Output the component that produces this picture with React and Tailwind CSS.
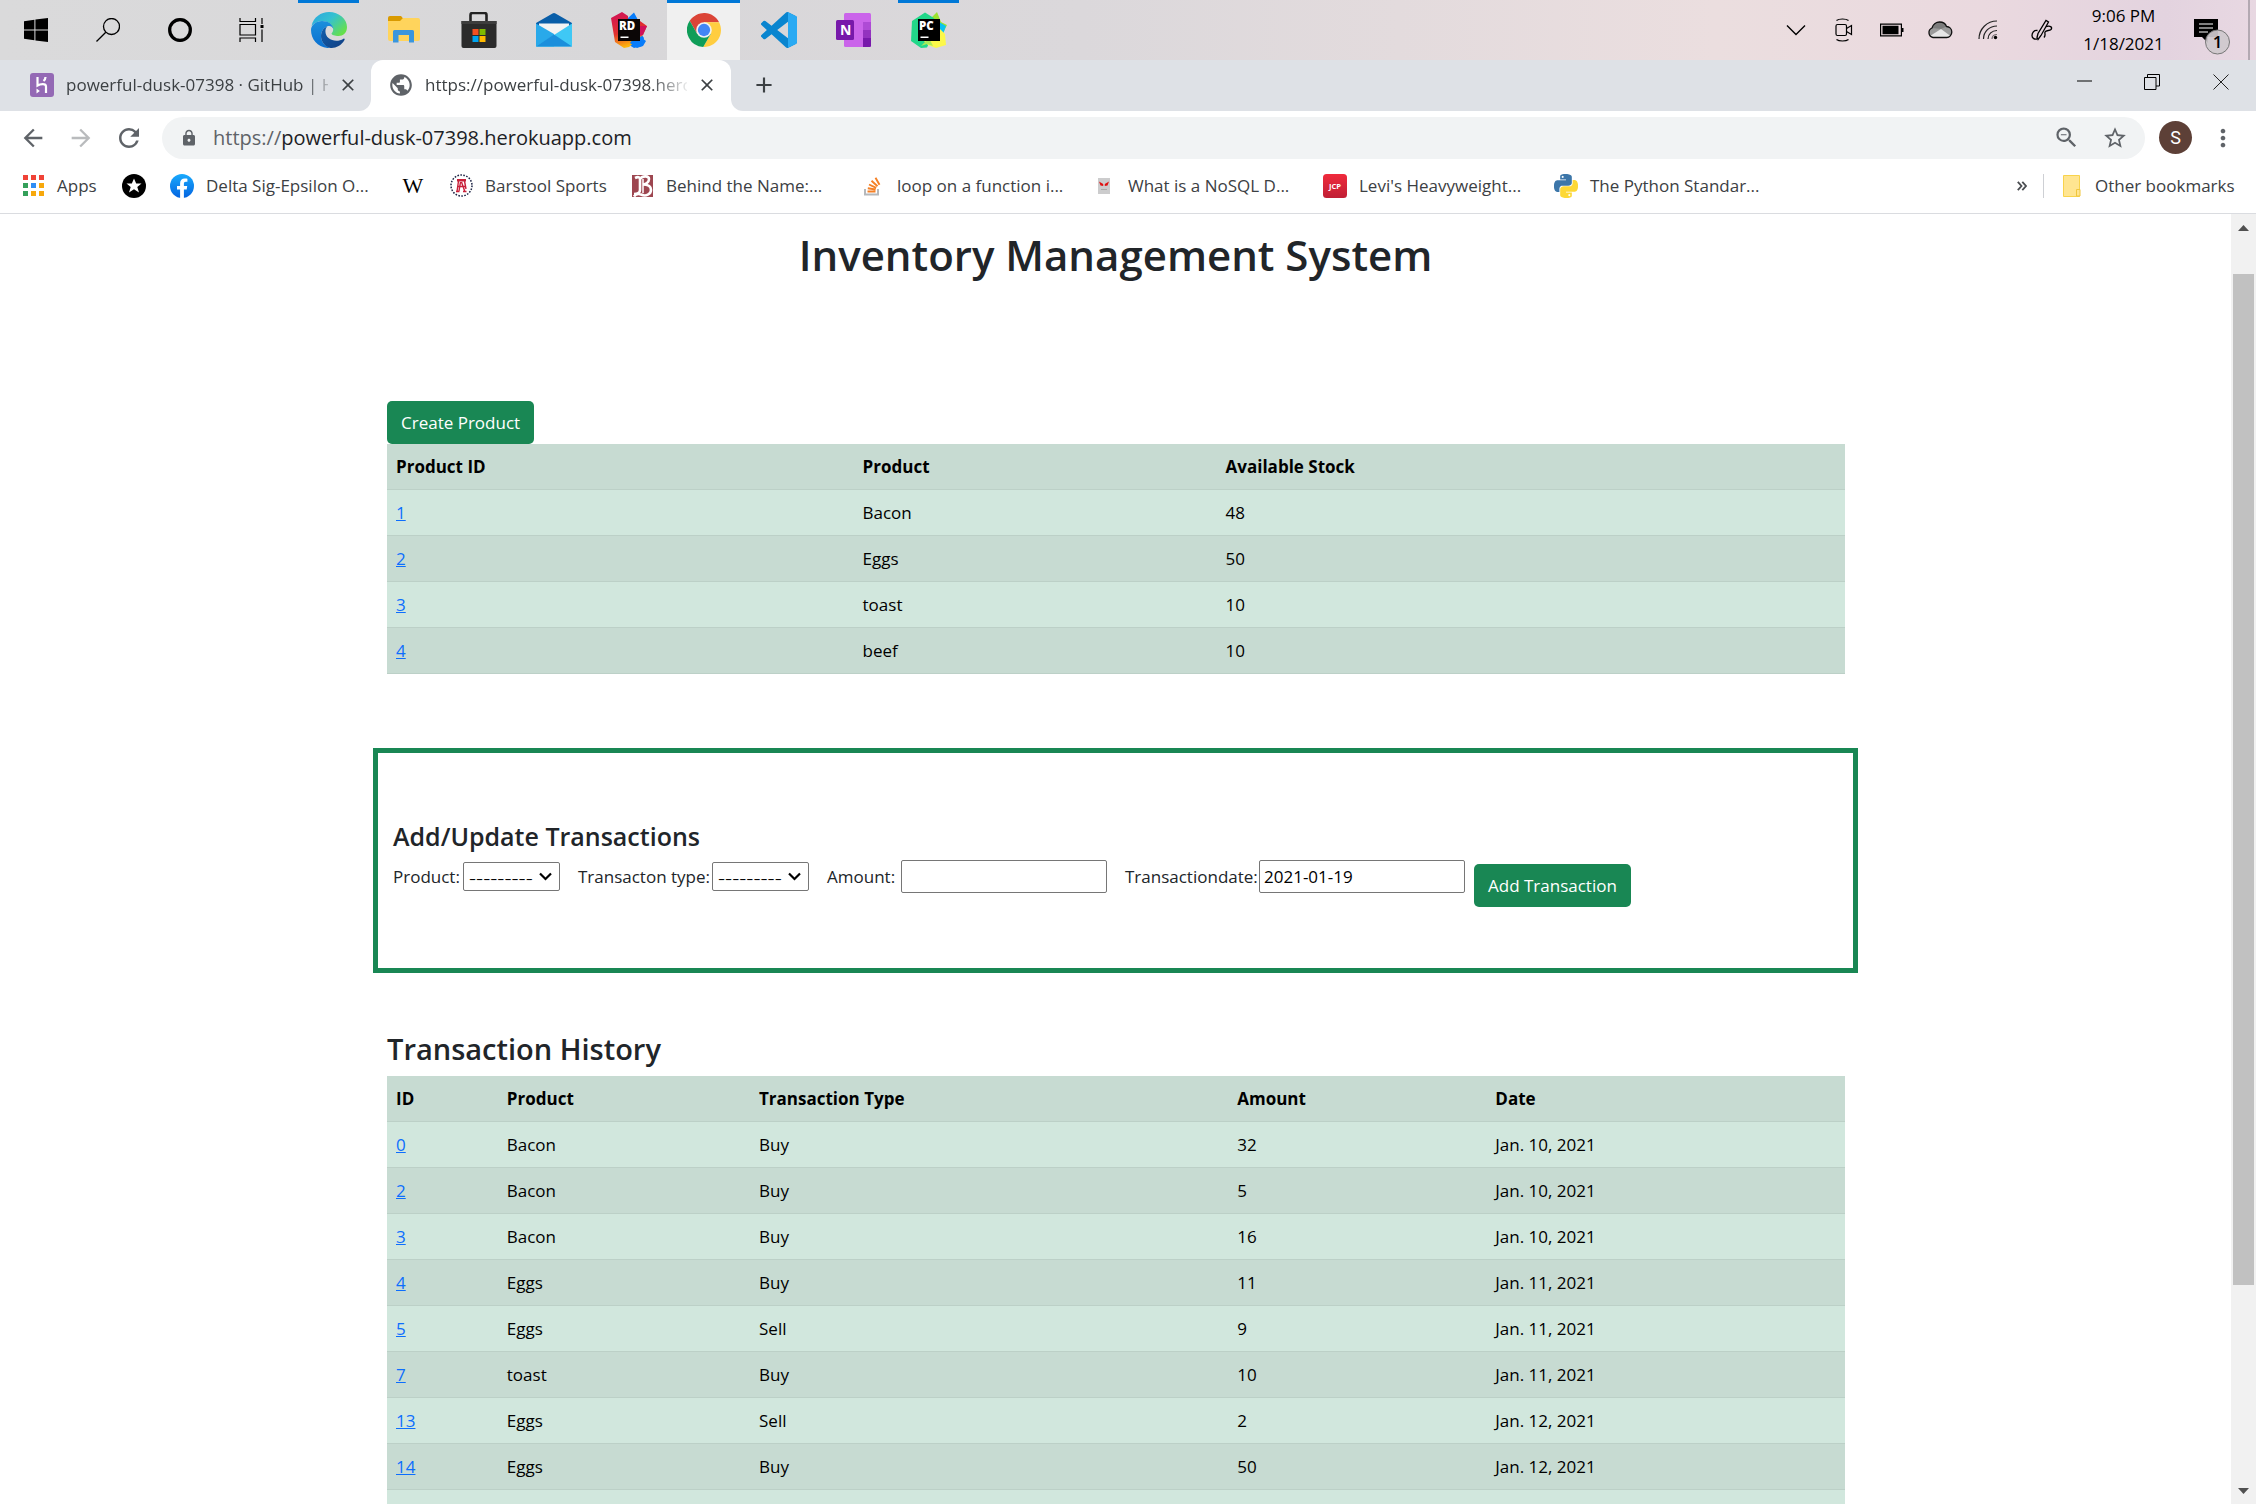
import React from "react";
import {
  MdArrowBack,
  MdArrowForward,
  MdRefresh,
  MdLock,
  MdZoomOut,
  MdStarBorder,
  MdMoreVert,
  MdPublic,
  MdAdd,
  MdClose,
} from "react-icons/md";

/* ---------- Taskbar icons ---------- */

const WindowsIcon = () => (
  <svg width="24" height="24" viewBox="0 0 24 24">
    <path d="M0 3.2 10.4 1.7V11.5H0zM11.4 1.6 24 0V11.5H11.4zM0 12.5H10.4V22.3L0 20.8zM11.4 12.5H24V24L11.4 22.4z" />
  </svg>
);

const SearchIcon = () => (
  <svg width="24" height="24" viewBox="0 0 24 24" fill="none" stroke="#000" strokeWidth="1.3">
    <circle cx="15.5" cy="8.5" r="8" />
    <path d="M9.8 14.2 0.5 23.5" />
  </svg>
);

const CortanaIcon = () => (
  <svg width="26" height="26" viewBox="0 0 26 26" fill="none" stroke="#000">
    <circle cx="13" cy="13" r="10.3" strokeWidth="3.2" />
    <circle cx="13" cy="13" r="11.6" strokeWidth="1" opacity=".35" />
  </svg>
);

const TaskViewIcon = () => (
  <svg width="26" height="24" viewBox="0 0 26 24" fill="none" stroke="#000" strokeWidth="1.2">
    <path d="M1 0v3.5h15.500V0M1 24v-4h15.500v4M1 6.500h15.500v10.500H1zM23 0v6M23 11.500V24" />
    <path d="M21.500 7h3v3h-3z" fill="#000" stroke="none" />
  </svg>
);

const EdgeIcon = () => (
  <svg width="36" height="36" viewBox="0 0 36 36">
    <defs>
      <linearGradient id="edgeTop" x1="0" y1="0" x2="1" y2=".7">
        <stop offset="0" stopColor="#2aa5e0" />
        <stop offset=".5" stopColor="#35c1d0" />
        <stop offset="1" stopColor="#66e04a" />
      </linearGradient>
      <linearGradient id="edgeBody" x1="0" y1="0" x2="0" y2="1">
        <stop offset="0" stopColor="#1b8fdc" />
        <stop offset="1" stopColor="#0a6fd0" />
      </linearGradient>
      <linearGradient id="edgeTail" x1="0" y1="0" x2="1" y2="1">
        <stop offset="0" stopColor="#0f5fae" />
        <stop offset="1" stopColor="#123f82" />
      </linearGradient>
    </defs>
    <path fill="url(#edgeTop)" d="M.5 14C2.500 5 10 0 18 0c10 0 18 7 18 15 0 6-4 9-8.500 9-3.500 0-7-1-7-2.500 1.500-1.500 2-3.500 1.500-5.500C21 11.500 16 9 11 9 7 9 3 11 .5 14z" />
    <path fill="url(#edgeBody)" d="M0 18c0-5 5-9 11-9 6.500 0 11 3.500 11.300 8-1-2.500-3.300-3.500-6.300-2.500-4 1.500-6 5.500-6 9.500 0 6 4.500 11 10 12C8 37 0 28 0 18z" />
    <path fill="url(#edgeTail)" d="M16 14.500c-2.500 3.500-2 8.500 1.500 11.500 4.500 3.700 10.500 3.500 15 .7.800-.4 1.500.3 1 1.300C30 34 24.500 36.200 19.500 36 13 34.500 10 29 10 24c0-4 2-8 6-9.500z" />
  </svg>
);

const FolderIcon = () => (
  <svg width="32" height="28" viewBox="0 0 32 28">
    <path d="M0 2a2 2 0 0 1 2-2h11l3 3.500L13 7H0z" fill="#d99a00" />
    <path d="M0 5h12l3-3h15a2 2 0 0 1 2 2v19a2 2 0 0 1-2 2H2a2 2 0 0 1-2-2z" fill="#ffd45c" />
    <path d="M5 15.500a1.500 1.500 0 0 1 1.500-1.500h18a1.500 1.500 0 0 1 1.500 1.500V26.500h-5V19H10.500v7.500H5z" fill="#3a96dd" />
  </svg>
);

const StoreIcon = () => (
  <svg width="36" height="36" viewBox="0 0 36 36">
    <path d="M9.500 11V3a2 2 0 0 1 2-2h12a2 2 0 0 1 2 2v8" fill="none" stroke="#222" strokeWidth="2.600" />
    <path d="M.5 9h35v25a2 2 0 0 1-2 2h-31a2 2 0 0 1-2-2z" fill="#2b2b2b" />
    <path d="M.5 9h35v3H.5z" fill="#3d3d3d" />
    <path d="M11.500 17h6v6h-6z" fill="#f25022" />
    <path d="M18.500 17h6v6h-6z" fill="#7fba00" />
    <path d="M11.500 24h6v6h-6z" fill="#00a4ef" />
    <path d="M18.500 24h6v6h-6z" fill="#ffb900" />
  </svg>
);

const MailIcon = () => (
  <svg width="36" height="34" viewBox="0 0 36 34">
    <path d="M0 10 16.500.5a3 3 0 0 1 3 0L36 10v4H0z" fill="#0a5ea8" />
    <path d="M3 10.500h30v12H3z" fill="#f3f3f3" />
    <path d="M0 10.500 18 21v12.500H0z" fill="#29a9ea" />
    <path d="M36 10.500 0 33.500h36z" fill="#3fc8f5" />
    <path d="M18 21.500 36 33.500H0z" fill="#1b8fdc" />
  </svg>
);

const RiderIcon = () => (
  <svg width="36" height="36" viewBox="0 0 36 36">
    <defs>
      <linearGradient id="rdA" x1="0" y1="0" x2=".3" y2="1">
        <stop offset="0" stopColor="#d0105a" />
        <stop offset=".6" stopColor="#e0302d" />
        <stop offset="1" stopColor="#fdb60d" />
      </linearGradient>
    </defs>
    <path d="M17 6 23 .5 27 8l2.500 13L33 26l-2 8-8 2-8-5z" fill="#087cfa" />
    <path d="M0 6 11 0l6 4v3l12 5 0-3 7 5-4 9-14 12-5 1-9-6z" fill="url(#rdA)" />
    <path d="M26 14l10 0-4 9-6 2z" fill="#d0105a" />
    <path d="M26 22 35 29l-3 5-6 2-7-5z" fill="#087cfa" />
    <path d="M7 7h22v22H7z" fill="#0b0606" />
    <path d="M9.500 24.500h8v1.500h-8z" fill="#fff" />
    <text x="8" y="17.500" fontSize="11.500" fontWeight="800" fontFamily="Open Sans, sans-serif" fill="#fff">RD</text>
  </svg>
);

const PyCharmIcon = () => (
  <svg width="36" height="36" viewBox="0 0 36 36">
    <path d="M20 6 26 0l4 10 6 3-6 12z" fill="#9be22f" />
    <path d="M28 10l7 4-3 8h-6z" fill="#07c3f2" />
    <path d="M1 9 14 .5l8 5 6 6-12 24-6 .5L0 29z" fill="#21d789" />
    <path d="M12 28 29 17l5 5 1 11-10 3-8-3z" fill="#fcf84a" />
    <path d="M10 34l8-8 4 8-6-2z" fill="#a8ea5a" />
    <path d="M7 7h22v22H7z" fill="#000" />
    <path d="M9.500 24.500h8v1.500h-8z" fill="#fff" />
    <text x="8" y="17.500" fontSize="11.500" fontWeight="800" fontFamily="Open Sans, sans-serif" fill="#fff">PC</text>
  </svg>
);

const ChromeIcon = () => (
  <svg width="34" height="34" viewBox="0 0 48 48">
    <path d="M24 24V13H45.300A24 24 0 0 0 3.800 11L14.500 29.500z" fill="#db4437" />
    <path d="M24 24 33.500 29.500 22.900 48A24 24 0 0 0 45.300 13H24z" fill="#ffcd40" />
    <path d="M24 24 14.500 29.500 3.800 11A24 24 0 0 0 22.900 48L33.500 29.500z" fill="#0f9d58" />
    <circle cx="24" cy="24" r="11" fill="#f1f1f1" />
    <circle cx="24" cy="24" r="8.700" fill="#4285f4" />
  </svg>
);

const CodeIcon = () => (
  <svg width="36" height="36" viewBox="0 0 24 24">
    <path
      fill="#0a85cf"
      d="M23.150 2.587L18.210.21a1.494 1.494 0 0 0-1.705.29l-9.460 8.630-4.120-3.128a.999.999 0 0 0-1.276.057L.327 7.261A1 1 0 0 0 .326 8.740L3.899 12 .326 15.260a1 1 0 0 0 .001 1.479L1.650 17.940a.999.999 0 0 0 1.276.057l4.120-3.128 9.460 8.630a1.492 1.492 0 0 0 1.704.29l4.942-2.377A1.500 1.500 0 0 0 24 20.060V3.939a1.500 1.500 0 0 0-.85-1.352zm-5.146 14.861L10.826 12l7.178-5.448v10.896z"
    />
    <path fill="#2aaaf3" d="M18 .15 23.150 2.587a1.500 1.500 0 0 1 .85 1.352V20.060a1.500 1.500 0 0 1-.85 1.352L18 23.850z" />
  </svg>
);

const OneNoteIcon = () => (
  <svg width="36" height="34" viewBox="0 0 36 34">
    <rect x="8" y="0" width="27" height="34" rx="1.500" fill="#ca64ea" />
    <path d="M27 9h8v8h-8z" fill="#ae4bd5" />
    <path d="M27 17h8v8h-8z" fill="#9332bf" />
    <path d="M27 25h8v7.500a1.500 1.500 0 0 1-1.500 1.500H27z" fill="#7719aa" />
    <rect x="0" y="7" width="18" height="20" rx="1.500" fill="#7719aa" />
    <text x="4" y="22" fontSize="14" fontWeight="700" fontFamily="Open Sans, sans-serif" fill="#fff">N</text>
  </svg>
);

/* ---------- Tray icons ---------- */

const ChevronIcon = () => (
  <svg width="20" height="12" viewBox="0 0 20 12" fill="none" stroke="#000" strokeWidth="1.400">
    <path d="M1 1.500 10 10.500 19 1.500" />
  </svg>
);

const MeetIcon = () => (
  <svg width="18" height="24" viewBox="0 0 18 24" fill="none" stroke="#000" strokeWidth="1.200">
    <path d="M1.500 2.500C4 .5 11 .5 13.500 2.500M1.500 21.500c2.500 2 9.500 2 12 0" />
    <rect x="1" y="6.500" width="10.500" height="11" rx="1.500" />
    <path d="M11.500 10.500 16.500 7.500v9L11.500 13.500" />
  </svg>
);

const BatteryIcon = () => (
  <svg width="24" height="14" viewBox="0 0 24 14">
    <path d="M.6 1.100h20.800v11.800H.6z" fill="none" stroke="#000" strokeWidth="1.200" />
    <path d="M2.500 2.800h16v8.400h-16zM22 5h1.500v4H22z" />
  </svg>
);

const CloudIcon = () => (
  <svg width="26" height="18" viewBox="0 0 26 18">
    <path d="M6 16.500a5 5 0 0 1-1-9.500C6 3 9.500 1 12.500 1s6 1.500 7 4.500c3 .2 5.300 2.500 5.300 5.500s-2.300 5.500-5 5.500z" fill="#9b9b9b" />
    <path d="M6 16.500 3 15l11-7 9.500 7-3.500 1.500z" fill="#e6e6e6" />
    <path d="M5 7c1-4 4.500-6 7.500-6s6 1.500 7 4.500L14 8z" fill="#7c7c7c" />
    <path d="M6 16.500a5 5 0 0 1-1-9.500C6 3 9.500 1 12.500 1s6 1.500 7 4.500c3 .2 5.300 2.500 5.300 5.500s-2.300 5.500-5 5.500z" fill="none" stroke="#111" strokeWidth="1.300" />
  </svg>
);

const WifiIcon = () => (
  <svg width="20" height="20" viewBox="0 0 20 20" fill="none" stroke="#222" strokeWidth="1.200">
    <path d="M1 19C1 9 9 1 19 1M5.500 19c0-7.500 6-13 13.500-13M10 19c0-5 4-8.500 9-8.500" />
    <path d="M14 19c0-2.500 2-4.500 5-4.500" opacity=".6" />
    <circle cx="17.500" cy="17.500" r="1.700" fill="#000" stroke="none" />
  </svg>
);

const PenIcon = () => (
  <svg width="22" height="22" viewBox="0 0 22 22" fill="none" stroke="#000" strokeWidth="1.300">
    <path d="M6 18.500 7 14.500 15 1.500 17.500 3 10 16.500 7 20.500 6 18.500z" />
    <path d="M6.500 11.500C3 11 1 13.500 1 16.500c0 2.500 2 4 5 3.500M15 7.500c5-1 6.500 1 5 3-1.500 1.500-5 .5-6 2.500-.5 2 1 3-1 5.500" />
  </svg>
);

const NotificationIcon = () => (
  <svg width="36" height="38" viewBox="0 0 36 38">
    <path d="M0 1h24v18H14v6l-6-6H0z" />
    <path d="M5 6h14M5 10h14M5 14h9" stroke="#fff" strokeWidth="1.100" />
    <circle cx="23.500" cy="24" r="12" fill="#cfc9cd" fillOpacity=".93" stroke="#777" strokeWidth="1" />
    <text x="23.500" y="30" textAnchor="middle" fontSize="17" fontWeight="600" fontFamily="Open Sans, sans-serif">1</text>
  </svg>
);

/* ---------- Bookmark icons ---------- */

const APP_COLORS = ["#f04337", "#f04337", "#f04337", "#34a05a", "#2f8df5", "#f7a80c", "#34a05a", "#f7a80c", "#f7a80c"];

const AppsIcon = () => (
  <svg width="21" height="21" viewBox="0 0 21 21">
    {APP_COLORS.map((c, i) => (
      <rect key={i} x={(i % 3) * 8} y={Math.floor(i / 3) * 8} width="5" height="5" fill={c} />
    ))}
  </svg>
);

const StarBadgeIcon = () => (
  <svg width="24" height="24" viewBox="0 0 24 24">
    <circle cx="12" cy="12" r="12" />
    <path d="M12 4.500l2.200 5h5.300l-4.200 3.500 1.700 5.500-5-3.300-5 3.300 1.700-5.500L4.500 9.500h5.300z" fill="#fff" />
  </svg>
);

const FacebookIcon = () => (
  <svg width="24" height="24" viewBox="0 0 24 24">
    <defs>
      <linearGradient id="fb" x1="0" y1="0" x2="0" y2="1">
        <stop offset="0" stopColor="#19aafd" />
        <stop offset="1" stopColor="#0464e0" />
      </linearGradient>
    </defs>
    <circle cx="12" cy="12" r="12" fill="url(#fb)" />
    <path d="M16.700 15.500l.5-3.500h-3.300V9.700c0-1 .5-1.900 2-1.900h1.500v-3s-1.400-.2-2.700-.2c-2.800 0-4.600 1.700-4.600 4.700V12H7v3.500h3.100V24h3.800v-8.500z" fill="#fff" />
  </svg>
);

const WikipediaIcon = () => (
  <span className="font-['Liberation_Serif',serif] text-[22px] leading-6 text-black">W</span>
);

const BarstoolIcon = () => (
  <svg width="23" height="23" viewBox="0 0 23 23" fill="none">
    <circle cx="11.500" cy="11.500" r="10.500" stroke="#1c2344" strokeWidth="1.500" strokeDasharray="1.600 1.400" />
    <path d="M7 5h9v2.500H7z" fill="#c8203a" />
    <path d="M8.500 7 7 17.500M11.500 8l3.500 10M10.500 8l-1.500 9M14.500 7l1.500 8M7.500 12.500h8.500M6 17.500h3.500M13 17.500h3.500" stroke="#c8203a" strokeWidth="1.400" />
  </svg>
);

const BehindNameIcon = () => (
  <svg width="23" height="24" viewBox="0 0 23 24">
    <path d="M1 1h21v22H1z" fill="#9d4650" />
    <path d="M4 4c4-2 5 0 5 1v11c0 3-3 4-6 4M9 5c3-4 9-3 9 0s-3 5-6 5.500c4 0 8 1.500 8 5.500s-5 7-10 4.500c-3-1-5-1-7 2" fill="none" stroke="#fff" strokeWidth="2.600" />
    <path d="M12 5v14" stroke="#fff" strokeWidth="1.500" />
  </svg>
);

const StackIcon = () => (
  <svg width="20" height="20" viewBox="0 0 20 20" fill="none">
    <path d="M2 13v5.500h13V13" stroke="#b5b8bb" strokeWidth="2" />
    <path d="M4.500 15.500h8M4.800 12.200l7.800 1.300M6 8.500l7.200 3.300M8.500 4.800l6 5.400M12.500 1.800l4 7" stroke="#f58025" strokeWidth="1.900" />
  </svg>
);

const GhostIcon = () => (
  <svg width="12" height="16" viewBox="0 0 12 16">
    <rect width="12" height="16" fill="#cccccd" />
    <path d="M1 3.500 5.200 6v2L2.500 7.500zM11 3.500 6.800 6v2l2.700-.5z" fill="#e01010" />
    <path d="M3 11.500h6" stroke="#aaa" strokeWidth="1" />
  </svg>
);

const JcpIcon = () => (
  <svg width="24" height="24" viewBox="0 0 24 24">
    <defs>
      <linearGradient id="jcp" x1="0" y1="0" x2="0" y2="1">
        <stop offset="0" stopColor="#f02a3c" />
        <stop offset="1" stopColor="#c01f35" />
      </linearGradient>
    </defs>
    <rect width="24" height="24" rx="3.500" fill="url(#jcp)" />
    <text x="12" y="14.700" textAnchor="middle" fontSize="7.500" fontWeight="700" fontFamily="Open Sans, sans-serif" fill="#fff">JCP</text>
  </svg>
);

const PythonIcon = () => (
  <svg width="24" height="24" viewBox="0 0 24 24">
    <path
      fill="#3c76a9"
      d="M14.250.18l.9.2.73.26.59.3.45.32.34.34.25.34.16.33.1.3.04.26.02.2-.01.13V8.500l-.05.63-.13.55-.21.46-.26.38-.3.31-.33.25-.35.19-.35.14-.33.1-.3.07-.26.04-.21.02H8.770l-.69.05-.59.14-.5.22-.41.27-.33.32-.27.35-.2.36-.15.37-.1.35-.07.32-.04.27-.02.21v3.060H3.170l-.21-.03-.28-.07-.32-.12-.35-.18-.36-.26-.36-.36-.35-.46-.32-.59-.28-.73-.21-.88-.14-1.050-.05-1.230.06-1.220.16-1.040.24-.87.32-.71.36-.57.4-.44.42-.33.42-.24.4-.16.36-.1.32-.05.24-.01h.16l.06.01h8.160v-.83H6.180l-.01-2.750-.02-.37.05-.34.11-.31.17-.28.25-.26.31-.23.38-.2.44-.18.51-.15.58-.12.64-.1.71-.06.77-.04.84-.02 1.270.05zm-6.300 1.980l-.23.33-.08.41.08.41.23.34.33.22.41.09.41-.09.33-.22.23-.34.08-.41-.08-.41-.23-.33-.33-.22-.41-.09-.41.09z"
    />
    <path
      fill="#fdd835"
      d="M21.040 6.110l.28.06.32.12.35.18.36.27.36.35.35.47.32.59.28.73.21.88.14 1.040.05 1.230-.06 1.230-.16 1.040-.24.86-.32.71-.36.57-.4.45-.42.33-.42.24-.4.16-.36.09-.32.05-.24.02-.16-.01h-8.220v.82h5.840l.01 2.760.02.36-.05.34-.11.31-.17.29-.25.25-.31.24-.38.2-.44.17-.51.15-.58.13-.64.09-.71.07-.77.04-.84.01-1.270-.04-1.070-.14-.9-.2-.73-.25-.59-.3-.45-.33-.34-.34-.25-.34-.16-.33-.1-.3-.04-.25-.02-.2.01-.13v-5.340l.05-.64.13-.54.21-.46.26-.38.3-.32.33-.24.35-.2.35-.14.33-.1.3-.06.26-.04.21-.02.13-.01h5.840l.69-.05.59-.14.5-.21.41-.28.33-.32.27-.35.2-.36.15-.36.1-.35.07-.32.04-.28.02-.21V6.070h2.090l.14.01zm-6.470 14.250l-.23.33-.08.41.08.41.23.33.33.23.41.08.41-.08.33-.23.23-.33.08-.41-.08-.41-.23-.33-.33-.23-.41-.08-.41.08z"
    />
  </svg>
);

const BookmarkFolderIcon = () => (
  <svg width="18" height="22" viewBox="0 0 18 22">
    <path d="M.5.5h16v21H.5z" fill="#ffe591" stroke="#f8d34c" />
    <path d="M13.500 14.500h3.500v6.500h-3.500z" fill="#ffe591" stroke="#f0c63c" />
  </svg>
);

const HerokuIcon = () => (
  <svg width="24" height="24" viewBox="0 0 24 24">
    <rect width="24" height="24" rx="3" fill="#9469b5" />
    <path d="M7.500 4v8.500c2.500-1.500 8.500-2.500 8.500 1V20M15.500 4c0 1.500-.7 3-2 4" fill="none" stroke="#fff" strokeWidth="2.200" />
    <path d="M6.500 15.500 9.800 18l-3.300 2.500z" fill="#fff" />
  </svg>
);

/* ---------- Taskbar ---------- */

const SYSTEM_BUTTONS = [
  ["Start", WindowsIcon],
  ["Search", SearchIcon],
  ["Cortana", CortanaIcon],
  ["Task View", TaskViewIcon],
];

const APP_BUTTONS = [
  ["Edge", EdgeIcon, "open"],
  ["File Explorer", FolderIcon],
  ["Store", StoreIcon],
  ["Mail", MailIcon],
  ["Rider", RiderIcon],
  ["Chrome", ChromeIcon, "active"],
  ["Visual Studio Code", CodeIcon],
  ["OneNote", OneNoteIcon],
  ["PyCharm", PyCharmIcon, "open"],
];

const TRAY = [
  ["Show hidden icons", ChevronIcon],
  ["Meet Now", MeetIcon],
  ["Battery", BatteryIcon],
  ["OneDrive", CloudIcon],
  ["Network", WifiIcon],
];

function Taskbar() {
  return (
    <div className="flex h-[60px] shrink-0 items-stretch bg-[linear-gradient(to_right,#dadadb_0%,#d8d7d9_28%,#dbd8db_48%,#ebdedf_76%,#ead9df_88%,#e3d3df_96%,#e8d8e2_100%)]">
      {SYSTEM_BUTTONS.map(([name, Icon]) => (
        <button key={name} aria-label={name} className="flex w-[72px] items-center justify-center">
          <Icon />
        </button>
      ))}
      <div className="ml-1 flex">
        {APP_BUTTONS.map(([name, Icon, state]) => (
          <button
            key={name}
            aria-label={name}
            className={
              state === "active"
                ? "relative mr-[2px] flex w-[73px] items-center justify-center bg-[#f0f0f0]"
                : "relative mr-[2px] flex w-[73px] items-center justify-center"
            }
          >
            {state === "active" && <span className="absolute inset-x-0 top-0 h-[3px] bg-[#0078d7]" />}
            {state === "open" && <span className="absolute inset-x-[6px] top-0 h-[3px] bg-[#0078d7]" />}
            <Icon />
          </button>
        ))}
      </div>
      <div className="ml-auto flex">
        {TRAY.map(([name, Icon]) => (
          <button key={name} aria-label={name} className="flex w-12 items-center justify-center">
            <Icon />
          </button>
        ))}
        <button aria-label="Windows Ink" className="flex w-[60px] items-center justify-center">
          <PenIcon />
        </button>
        <div className="flex w-[103px] flex-col items-center justify-center text-[17px] leading-7 text-black">
          <span>9:06 PM</span>
          <span>1/18/2021</span>
        </div>
        <button aria-label="Notifications" className="flex w-[73px] items-center justify-center pt-[13px]">
          <NotificationIcon />
        </button>
        <div className="mr-1.5 w-[2px] bg-[#b3a9b2]" />
      </div>
    </div>
  );
}

/* ---------- Browser chrome ---------- */

function TabStrip() {
  return (
    <div className="flex h-[51px] shrink-0 bg-white text-[17px] text-[#3c4043]">
      <div className="flex w-[371px] items-center rounded-br-xl bg-[#dee1e6] pb-0.5 pl-[30px]">
        <HerokuIcon />
        <span className="ml-3 w-[262px] overflow-hidden whitespace-nowrap [mask-image:linear-gradient(to_right,#000_238px,transparent_270px)]">
          powerful-dusk-07398 · GitHub | Heroku
        </span>
        <button aria-label="Close tab" className="ml-2.5">
          <MdClose size={20} />
        </button>
      </div>
      <div className="bg-[linear-gradient(#dee1e6_50%,#fff_50%)]">
        <div className="flex h-full w-[360px] items-center rounded-t-xl bg-white pb-0.5 pl-[17px]">
          <MdPublic size={26} color="#5f6368" />
          <span className="ml-[11px] w-[262px] overflow-hidden whitespace-nowrap [mask-image:linear-gradient(to_right,#000_225px,transparent_266px)]">
            https://powerful-dusk-07398.herokuapp.com
          </span>
          <button aria-label="Close tab" className="ml-2.5">
            <MdClose size={20} />
          </button>
        </div>
      </div>
      <div className="flex flex-1 items-center rounded-bl-xl bg-[#dee1e6] pb-0.5 pl-5">
        <button aria-label="New tab">
          <MdAdd size={26} />
        </button>
        <div className="mb-1.5 ml-auto flex text-black">
          <button aria-label="Minimize" className="flex w-[68px] items-center justify-center">
            <svg width="15" height="15" viewBox="0 0 15 15"><path d="M0 6.500h15v1H0z" /></svg>
          </button>
          <button aria-label="Restore" className="flex w-[68px] items-center justify-center">
            <svg width="16" height="16" viewBox="0 0 16 16" fill="none" stroke="#000">
              <path d="M.5 3.500h11.500v12H.5zM3.500 3.500V.5h12v11.500H12" />
            </svg>
          </button>
          <button aria-label="Close window" className="flex w-[70px] items-center justify-center">
            <svg width="16" height="16" viewBox="0 0 16 16" stroke="#222"><path d="M.5.5l15 15M15.500.5l-15 15" /></svg>
          </button>
        </div>
      </div>
    </div>
  );
}

function AddressBar() {
  return (
    <div className="flex h-[51px] shrink-0 items-center bg-white pt-0.5 text-[#5f6368]">
      <button aria-label="Back" className="ml-[9px] flex w-12 justify-center"><MdArrowBack size={28} /></button>
      <button aria-label="Forward" className="flex w-12 justify-center text-[#b9bbbd]"><MdArrowForward size={28} /></button>
      <button aria-label="Reload" className="flex w-12 justify-center"><MdRefresh size={30} /></button>
      <div className="ml-[9px] flex h-[42px] flex-1 items-center rounded-full bg-[#f1f3f4] pr-[17px] pl-[18px]">
        <MdLock size={18} />
        <div role="textbox" aria-label="Address" className="ml-[15px] text-[20px] leading-7">
          https://<span className="text-[#202124]">powerful-dusk-07398.herokuapp.com</span>
        </div>
        <button aria-label="Zoom" className="ml-auto"><MdZoomOut size={27} /></button>
        <button aria-label="Bookmark this page" className="ml-[22px]"><MdStarBorder size={26} /></button>
      </div>
      <button
        aria-label="Profile"
        className="ml-3.5 flex size-[33px] items-center justify-center rounded-full bg-[#5d4037] font-[Roboto,sans-serif] text-[18px] text-white"
      >
        S
      </button>
      <button aria-label="Menu" className="mr-[19px] ml-[17px]"><MdMoreVert size={28} /></button>
    </div>
  );
}

function Bookmark({ icon: Icon, label, className }) {
  return (
    <a href="#" aria-label={label ? undefined : "Bookmark"} className={`flex items-center ${className}`}>
      <span className="flex w-6 shrink-0 justify-center"><Icon /></span>
      {label && <span className="ml-3 whitespace-nowrap">{label}</span>}
    </a>
  );
}

function BookmarkBar() {
  return (
    <div className="flex h-[52px] shrink-0 items-center border-b border-[#dadce0] bg-white pb-1 pl-[21px] text-[17px] text-[#3c4043]">
      <Bookmark icon={AppsIcon} label="Apps" className="w-[101px]" />
      <Bookmark icon={StarBadgeIcon} className="w-12" />
      <Bookmark icon={FacebookIcon} label="Delta Sig-Epsilon O..." className="w-[231px]" />
      <Bookmark icon={WikipediaIcon} className="w-12" />
      <Bookmark icon={BarstoolIcon} label="Barstool Sports" className="w-[181px]" />
      <Bookmark icon={BehindNameIcon} label="Behind the Name:..." className="w-[231px]" />
      <Bookmark icon={StackIcon} label="loop on a function i..." className="w-[231px]" />
      <Bookmark icon={GhostIcon} label="What is a NoSQL D..." className="w-[231px]" />
      <Bookmark icon={JcpIcon} label="Levi's Heavyweight..." className="w-[231px]" />
      <Bookmark icon={PythonIcon} label="The Python Standar..." className="w-[231px]" />
      <button aria-label="More bookmarks" className="ml-auto">
        <svg width="10" height="10" viewBox="0 0 10 10" fill="none" stroke="#4a4d51" strokeWidth="1.800">
          <path d="M.8.8 4.500 5 .8 9.200M5.300.8 9 5 5.300 9.200" />
        </svg>
      </button>
      <span className="ml-4 h-6 w-px bg-[#ced0d4]" />
      <a href="#" className="ml-[19px] flex w-[193px] items-center">
        <BookmarkFolderIcon />
        <span className="ml-3.5 whitespace-nowrap">Other bookmarks</span>
      </a>
    </div>
  );
}

/* ---------- Page content ---------- */

const PRODUCTS = [
  ["1", "Bacon", "48"],
  ["2", "Eggs", "50"],
  ["3", "toast", "10"],
  ["4", "beef", "10"],
];

const TRANSACTIONS = [
  ["0", "Bacon", "Buy", "32", "Jan. 10, 2021"],
  ["2", "Bacon", "Buy", "5", "Jan. 10, 2021"],
  ["3", "Bacon", "Buy", "16", "Jan. 10, 2021"],
  ["4", "Eggs", "Buy", "11", "Jan. 11, 2021"],
  ["5", "Eggs", "Sell", "9", "Jan. 11, 2021"],
  ["7", "toast", "Buy", "10", "Jan. 11, 2021"],
  ["13", "Eggs", "Sell", "2", "Jan. 12, 2021"],
  ["14", "Eggs", "Buy", "50", "Jan. 12, 2021"],
  ["", "", "", "", ""],
];

function StripedTable({ columns, rows }) {
  return (
    <table className="w-full table-fixed border-separate border-spacing-0 text-left text-[17px] leading-[27px] text-black">
      <thead>
        <tr className="bg-[#c7dbd2]">
          {columns.map(([name, width]) => (
            <th key={name} className={`h-[46px] border-b border-[#bcd0c7] px-[9px] font-bold ${width}`}>{name}</th>
          ))}
        </tr>
      </thead>
      <tbody>
        {rows.map((row, r) => (
          <tr key={r} className="odd:bg-[#d1e7dd] even:bg-[#c7dbd2]">
            {row.map((cell, c) => (
              <td key={c} className="h-[46px] border-b border-[#bcd0c7] px-[9px]">
                {c === 0 ? <a href="#" className="text-[#0d6efd] underline">{cell}</a> : cell}
              </td>
            ))}
          </tr>
        ))}
      </tbody>
    </table>
  );
}

function SelectField({ id, label, width }) {
  return (
    <div className="flex items-center">
      <label htmlFor={id} className={`whitespace-nowrap ${width}`}>{label}</label>
      <div className="relative">
        <select
          id={id}
          className="block h-[29px] w-[97px] appearance-none rounded-[2px] border border-[#767676] bg-white pl-[5px] text-[22px] leading-[26px] font-light text-black"
        >
          <option>---------</option>
        </select>
        <svg className="pointer-events-none absolute top-2.5 right-2" width="13" height="9" viewBox="0 0 13 9" fill="none" stroke="#000" strokeWidth="2.200">
          <path d="M1 1.500 6.500 7 12 1.500" />
        </svg>
      </div>
    </div>
  );
}

function TextField({ id, label, width, value }) {
  return (
    <div className="flex items-center">
      <label htmlFor={id} className={`whitespace-nowrap ${width}`}>{label}</label>
      <input
        id={id}
        type="text"
        defaultValue={value}
        className="h-[33px] w-[206px] rounded-[2px] border border-[#767676] bg-white px-1 text-[17px] text-black"
      />
    </div>
  );
}

const GREEN_BUTTON = "h-[43px] rounded-[5px] bg-[#198754] px-3.5 text-[17px] text-white";

function Page() {
  return (
    <main className="min-w-0 flex-1 overflow-hidden bg-white text-[17px] text-[#212529]">
      <div className="mx-auto max-w-[1485px]">
        <h1 className="pt-[14px] text-center text-[42px] leading-[54px] font-semibold">Inventory Management System</h1>
        <section className="mt-[119px] pr-[13px] pl-[14px]">
          <button className={`block ${GREEN_BUTTON}`}>Create Product</button>
          <StripedTable
            columns={[["Product ID", "w-[32%]"], ["Product", "w-[24.9%]"], ["Available Stock", "w-[43.1%]"]]}
            rows={PRODUCTS}
          />
        </section>
        <section className="mt-[74px] border-5 border-[#198754] px-[15px] pt-[67px] pb-[61px]">
          <h2 className="text-[25px] leading-8 font-semibold">Add/Update Transactions</h2>
          <form className="mt-2 flex items-start">
            <div className="flex h-[33px] items-center gap-[18px]">
              <SelectField id="product" label="Product:" width="w-[70px]" />
              <SelectField id="type" label="Transacton type:" width="w-[134px]" />
              <TextField id="amount" label="Amount:" width="w-[74px]" />
              <TextField id="date" label="Transactiondate:" width="w-[134px]" value="2021-01-19" />
            </div>
            <button type="button" className={`mt-1 ml-[9px] ${GREEN_BUTTON}`}>Add Transaction</button>
          </form>
        </section>
        <section className="mt-[58px] pr-[13px] pl-[14px]">
          <h2 className="mb-[9px] text-[29px] leading-9 font-semibold">Transaction History</h2>
          <StripedTable
            columns={[
              ["ID", "w-[7.6%]"],
              ["Product", "w-[17.3%]"],
              ["Transaction Type", "w-[32.8%]"],
              ["Amount", "w-[17.7%]"],
              ["Date", "w-[24.6%]"],
            ]}
            rows={TRANSACTIONS}
          />
        </section>
      </div>
    </main>
  );
}

function Scrollbar() {
  return (
    <div className="flex w-[25px] shrink-0 flex-col bg-[#f1f1f1]">
      <button aria-label="Scroll up" className="flex h-[27px] shrink-0 items-center justify-center">
        <svg width="11" height="6" viewBox="0 0 11 6"><path d="M5.500 0 11 6H0z" fill="#505050" /></svg>
      </button>
      <div className="flex-1 px-[2px] pt-[33px]">
        <div className="h-[84%] bg-[#c1c1c1]" />
      </div>
      <button aria-label="Scroll down" className="flex h-[27px] shrink-0 items-center justify-center">
        <svg width="11" height="6" viewBox="0 0 11 6"><path d="M0 0h11L5.500 6z" fill="#505050" /></svg>
      </button>
    </div>
  );
}

export default function App() {
  return (
    <div className="flex h-screen flex-col overflow-hidden bg-white font-['Open_Sans',sans-serif]">
      <Taskbar />
      <TabStrip />
      <AddressBar />
      <BookmarkBar />
      <div className="flex min-h-0 flex-1">
        <Page />
        <Scrollbar />
      </div>
    </div>
  );
}
